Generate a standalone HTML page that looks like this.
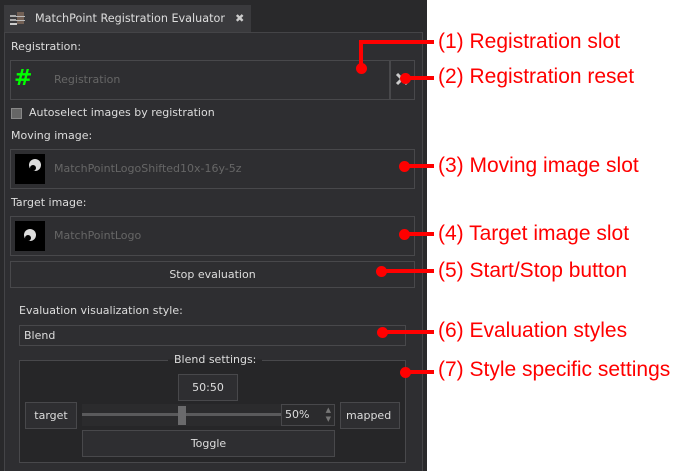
<!DOCTYPE html>
<html><head><style>
*{box-sizing:border-box;margin:0;padding:0}
body{width:673px;height:471px;background:#fff;position:relative;overflow:hidden;font-family:"DejaVu Sans","Liberation Sans",sans-serif;font-size:11px;color:#ddd}
.a{position:absolute}
#dark{left:0;top:0;width:427px;height:471px;background:#29292b}
#tab{left:4px;top:5px;width:247px;height:28px;background:#3a3a3d;color:#ddd;font-size:11.2px;line-height:28px;padding-left:31px}
#panel{left:4px;top:32px;width:419px;height:439px;background:#2e2e31;border:1px solid #444447;border-bottom:none}
.lbl{font-size:11px;color:#ddd}
.box{border:1px solid #48484b;background:#2e2e31}
.ph{color:#666;font-size:11px}
.btn{border:1px solid #48484b;background:#2e2e31;text-align:center;color:#ddd}
.img{background:#000;width:30px;height:30px}
.ann{font-family:"Liberation Sans",sans-serif;font-size:21px;color:#f00;left:438px;white-space:nowrap;line-height:20px}
.ln{background:#f00;height:4px}
.dot{width:11px;height:11px;border-radius:50%;background:#f00}
</style></head><body>
<div class="a" id="dark"></div>
<div class="a" id="tab">MatchPoint Registration Evaluator<span style="position:absolute;left:231px;color:#ccc;font-weight:bold">✖</span></div>
<svg class="a" style="left:10px;top:11px" width="16" height="16"><rect x="0" y="4" width="6" height="2" fill="#aaa"/><rect x="0" y="8" width="6" height="2" fill="#aaa"/><rect x="0" y="12" width="7" height="2" fill="#ccc"/><rect x="7" y="1" width="7" height="12" fill="#8a7060" opacity=".7"/><rect x="6" y="5" width="9" height="1" fill="#bbb"/><rect x="6" y="9" width="9" height="1" fill="#bbb"/></svg>
<div class="a" id="panel"></div>
<div class="a lbl" style="left:11px;top:40px">Registration:</div>
<div class="a box" style="left:10px;top:60px;width:380px;height:40px"></div>
<div class="a" style="left:14px;top:67px;color:#0f0;font-size:22px;font-weight:bold;line-height:24px">#</div>
<div class="a ph" style="left:54px;top:73px">Registration</div>
<div class="a box" style="left:390px;top:60px;width:25px;height:40px"></div>
<svg class="a" style="left:395px;top:72px" width="14" height="14"><path d="M2 2L12 12M12 2L2 12" stroke="#ccc" stroke-width="3"/></svg>
<div class="a" style="left:11px;top:108px;width:11px;height:11px;background:#666;border:1px solid #888"></div>
<div class="a lbl" style="left:29px;top:106px">Autoselect images by registration</div>
<div class="a lbl" style="left:11px;top:129px">Moving image:</div>
<div class="a box" style="left:10px;top:149px;width:405px;height:40px"></div>
<div class="a img" style="left:15px;top:154px"><svg width="30" height="30"><circle cx="20" cy="11" r="6" fill="#ddd"/><circle cx="18" cy="14" r="3" fill="#000"/></svg></div>
<div class="a ph" style="left:54px;top:162px">MatchPointLogoShifted10x-16y-5z</div>
<div class="a lbl" style="left:11px;top:196px">Target image:</div>
<div class="a box" style="left:10px;top:216px;width:405px;height:40px"></div>
<div class="a img" style="left:15px;top:221px"><svg width="30" height="30"><circle cx="15" cy="14" r="6" fill="#ddd"/><circle cx="13" cy="17" r="3" fill="#000"/></svg></div>
<div class="a ph" style="left:54px;top:229px">MatchPointLogo</div>
<div class="a btn" style="left:10px;top:261px;width:405px;height:27px;line-height:25px">Stop evaluation</div>
<div class="a lbl" style="left:19px;top:304px">Evaluation visualization style:</div>
<div class="a box" style="left:19px;top:325px;width:387px;height:21px;padding-left:4px;line-height:19px">Blend</div>
<div class="a" style="left:19px;top:360px;width:387px;height:103px;border:1px solid #48484b;background:#262628"></div>
<div class="a lbl" style="left:168px;top:353px;padding:0 6px;background:linear-gradient(#2e2e31 50%,#262628 50%)">Blend settings:</div>
<div class="a btn" style="left:178px;top:374px;width:60px;height:27px;line-height:25px">50:50</div>
<div class="a btn" style="left:25px;top:402px;width:52px;height:27px;line-height:25px">target</div>
<div class="a" style="left:82px;top:404px;width:200px;height:22px;background:#2b2b2d"></div>
<div class="a" style="left:82px;top:413px;width:200px;height:3px;background:#5a5a5c"></div>
<div class="a" style="left:178px;top:406px;width:8px;height:19px;background:#6a6a6c"></div>
<div class="a box" style="left:281px;top:404px;width:54px;height:22px;padding-left:3px;line-height:20px;background:#2b2b2d">50%<span style="position:absolute;right:3px;top:1px;font-size:7px;line-height:9px;color:#777">▲<br>▼</span></div>
<div class="a btn" style="left:340px;top:402px;width:60px;height:27px;line-height:25px;overflow:hidden;padding-left:5px;text-align:left">mapped</div>
<div class="a btn" style="left:82px;top:430px;width:253px;height:27px;line-height:25px">Toggle</div>

<div class="a ln" style="left:359px;top:40px;width:75px"></div>
<div class="a" style="left:359px;top:40px;width:4px;height:28px;background:#f00"></div>
<div class="a dot" style="left:356px;top:63px"></div>
<div class="a ann" style="top:32px">(1) Registration slot</div>
<div class="a dot" style="left:400px;top:73px"></div><div class="a ln" style="left:405px;top:76px;width:29px"></div>
<div class="a ann" style="top:67px">(2) Registration reset</div>
<div class="a dot" style="left:399px;top:161px"></div><div class="a ln" style="left:404px;top:164px;width:30px"></div>
<div class="a ann" style="top:156px">(3) Moving image slot</div>
<div class="a dot" style="left:399px;top:229px"></div><div class="a ln" style="left:404px;top:232px;width:30px"></div>
<div class="a ann" style="top:224px">(4) Target image slot</div>
<div class="a dot" style="left:376px;top:266px"></div><div class="a ln" style="left:381px;top:269px;width:53px"></div>
<div class="a ann" style="top:261px">(5) Start/Stop button</div>
<div class="a dot" style="left:377px;top:327px"></div><div class="a ln" style="left:382px;top:330px;width:52px"></div>
<div class="a ann" style="top:321px">(6) Evaluation styles</div>
<div class="a dot" style="left:400px;top:367px"></div><div class="a ln" style="left:405px;top:370px;width:29px"></div>
<div class="a ann" style="top:360px">(7) Style specific settings</div>
</body></html>
